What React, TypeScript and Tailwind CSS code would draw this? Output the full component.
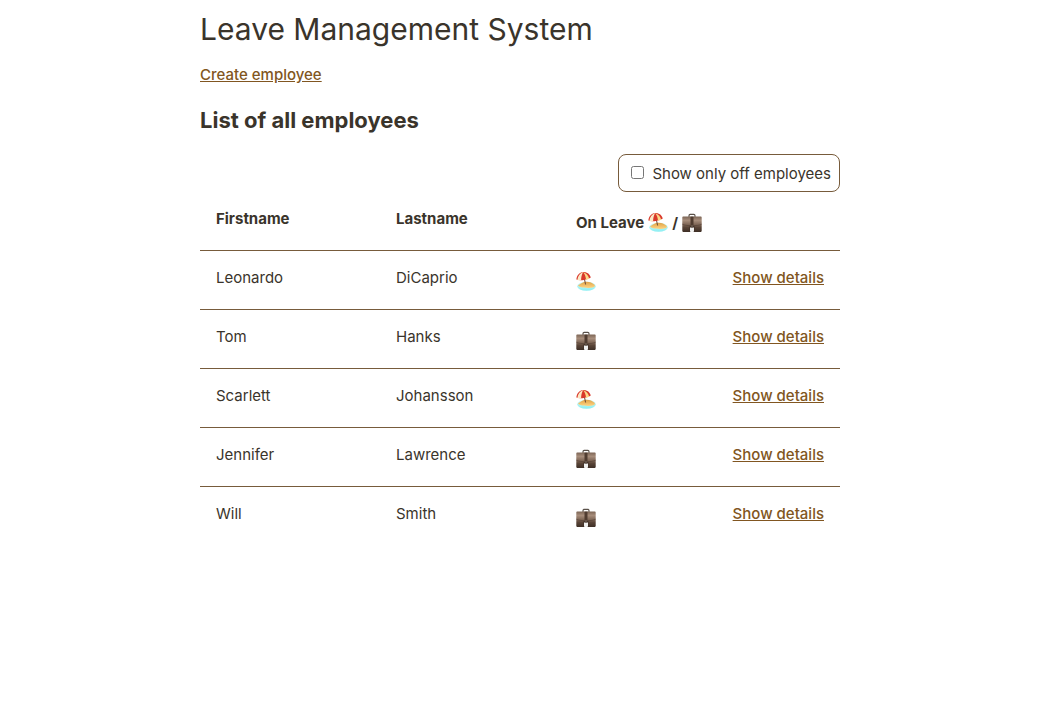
import { useState } from "react";

type Employee = { first: string; last: string; onLeave: boolean };

const employees: Employee[] = [
  { first: "Leonardo", last: "DiCaprio", onLeave: true },
  { first: "Tom", last: "Hanks", onLeave: false },
  { first: "Scarlett", last: "Johansson", onLeave: true },
  { first: "Jennifer", last: "Lawrence", onLeave: false },
  { first: "Will", last: "Smith", onLeave: false },
];

function Beach() {
  return (
    <svg className="size-5 shrink-0 overflow-visible" viewBox="0 1 20 20" role="img" aria-label="On leave">
      <defs>
        <linearGradient id="sea" x1="0" y1="0" x2="0" y2="1">
          <stop offset="0" stopColor="#d8fcfb" />
          <stop offset="1" stopColor="#8aeef2" />
        </linearGradient>
        <linearGradient id="sand" x1="0" y1="0" x2="0" y2="1">
          <stop offset="0" stopColor="#dfa247" />
          <stop offset="1" stopColor="#ffd583" />
        </linearGradient>
      </defs>
      <ellipse cx="10.500" cy="15.200" rx="9.300" ry="4.500" fill="url(#sea)" />
      <path d="M2 14.400C4 13.400 5.500 11.200 9.500 10.700c4-.4 6.500 1 8.700 2.800 1.200 1.100.8 2.200-.7 2.700-2.700.9-6.500.9-9.500.4-2-.3-5-.6-6-2.200z" fill="url(#sand)" />
      <path d="M8 6l1.600 7.500" stroke="#6b4a38" strokeWidth="1" />
      <path d="M.4 8.600C.6 4.500 3.300 1.300 7.200.9c4-.1 6.900 2.300 7.600 5.700-1.500 1.200-4.200 2-7 2.400-2.700.3-5.600.3-7.400-.4z" fill="#d9382b" />
      <path d="M7.200.9C3.800 2.400 1.800 5 1.400 8.900c1.200.3 2.400.4 3.700.3C5.200 6 5.600 3.400 7.200.9z" fill="#fbe9c6" />
      <path d="M7.200.9c1.700 2.200 2.500 4.500 2.800 7.800 1.200-.2 2.200-.5 3.200-.9C12.600 4.700 10.500 2.200 7.200.9z" fill="#fbd887" />
    </svg>
  );
}

function Briefcase() {
  return (
    <svg className="size-5 shrink-0" viewBox="0 0 20 20" role="img" aria-label="Working">
      <defs>
        <linearGradient id="leather" x1="0" y1="0" x2="0" y2="1">
          <stop offset="0" stopColor="#7d6656" />
          <stop offset="0.250" stopColor="#a78d7b" />
          <stop offset="0.550" stopColor="#7a6252" />
          <stop offset="0.700" stopColor="#5a4538" />
          <stop offset="1" stopColor="#3e2f26" />
        </linearGradient>
      </defs>
      <path d="M7 4V2.400c0-.7.4-1 1.100-1h3.800c.7 0 1.100.3 1.100 1V4" fill="none" stroke="#5a5049" strokeWidth="1.100" />
      <path d="M1.100 3.600h17.800c.5 0 .8.300.8.800v13.700c0 .5-.3.800-.8.800H1.100c-.5 0-.8-.3-.8-.8V4.400c0-.5.3-.8.8-.8z" fill="url(#leather)" />
      <path d="M.3 11.200c2.600 1.100 5 1.400 7.700 1.400h4c2.700 0 5.100-.3 7.700-1.400" fill="none" stroke="#4b392e" strokeWidth="0.500" />
      <rect x="8.500" y="3.600" width="3" height="8.600" fill="#503c30" />
      <path d="M7.500 13.200h5v4c0 .6-.4 1-1 1h-3c-.6 0-1-.4-1-1z" fill="#3d2d24" />
      <path d="M8 14.500h4v3.500c0 .6-.4.900-.9.900H8.900c-.5 0-.9-.3-.9-.9z" fill="#f0f0ef" />
      <rect x="9.200" y="12" width="1.600" height="2.600" fill="#67574d" />
    </svg>
  );
}

const link = "font-medium text-[#815621] underline underline-offset-1";

export default function App() {
  const [onlyOff, setOnlyOff] = useState(false);
  const rows = onlyOff ? employees.filter((e) => e.onLeave) : employees;

  return (
    <div className="min-h-screen bg-white pl-0.5 font-['Inter',sans-serif] text-[15px] leading-[22px] text-[#3a342b]">
      <main className="mx-auto max-w-[640px]">
        <h1 className="pt-2 text-[30px] leading-[42px]">Leave Management System</h1>
        <p className="mt-3.5">
          <a href="#create" className={link}>Create employee</a>
        </p>
        <h2 className="mt-4 text-[22px] leading-9 font-bold">List of all employees</h2>
        <div className="mt-4 flex justify-end">
          <label className="flex items-center gap-2 rounded-lg border border-[#775b3b] px-2 pt-2 pb-1.5">
            <input
              type="checkbox"
              checked={onlyOff}
              onChange={(e) => setOnlyOff(e.target.checked)}
              className="mb-1 ml-1 size-[13px]"
            />
            Show only off employees
          </label>
        </div>
        <table className="w-full table-fixed text-left align-top">
          <thead>
            <tr className="border-b border-[#775b3b] align-top">
              <th className="w-[180px] p-4 font-bold">Firstname</th>
              <th className="w-[180px] p-4 font-bold">Lastname</th>
              <th className="p-4 font-bold whitespace-nowrap">
                <div className="flex h-[26px] items-center gap-1 pt-1">
                  On Leave <Beach /> / <Briefcase />
                </div>
              </th>
              <th className="w-[124px] p-4" aria-label="Actions" />
            </tr>
          </thead>
          <tbody>
            {rows.map((e) => (
              <tr key={e.last} className="border-b border-[#775b3b] align-top last:border-b-0">
                <td className="p-4">{e.first}</td>
                <td className="p-4">{e.last}</td>
                <td className="p-4">
                  <div className="flex h-[26px] items-center pt-1">
                    {e.onLeave ? <Beach /> : <Briefcase />}
                  </div>
                </td>
                <td className="py-4 pr-4 text-right whitespace-nowrap">
                  <a href={`#${e.last}`} className={link}>Show details</a>
                </td>
              </tr>
            ))}
          </tbody>
        </table>
      </main>
    </div>
  );
}
